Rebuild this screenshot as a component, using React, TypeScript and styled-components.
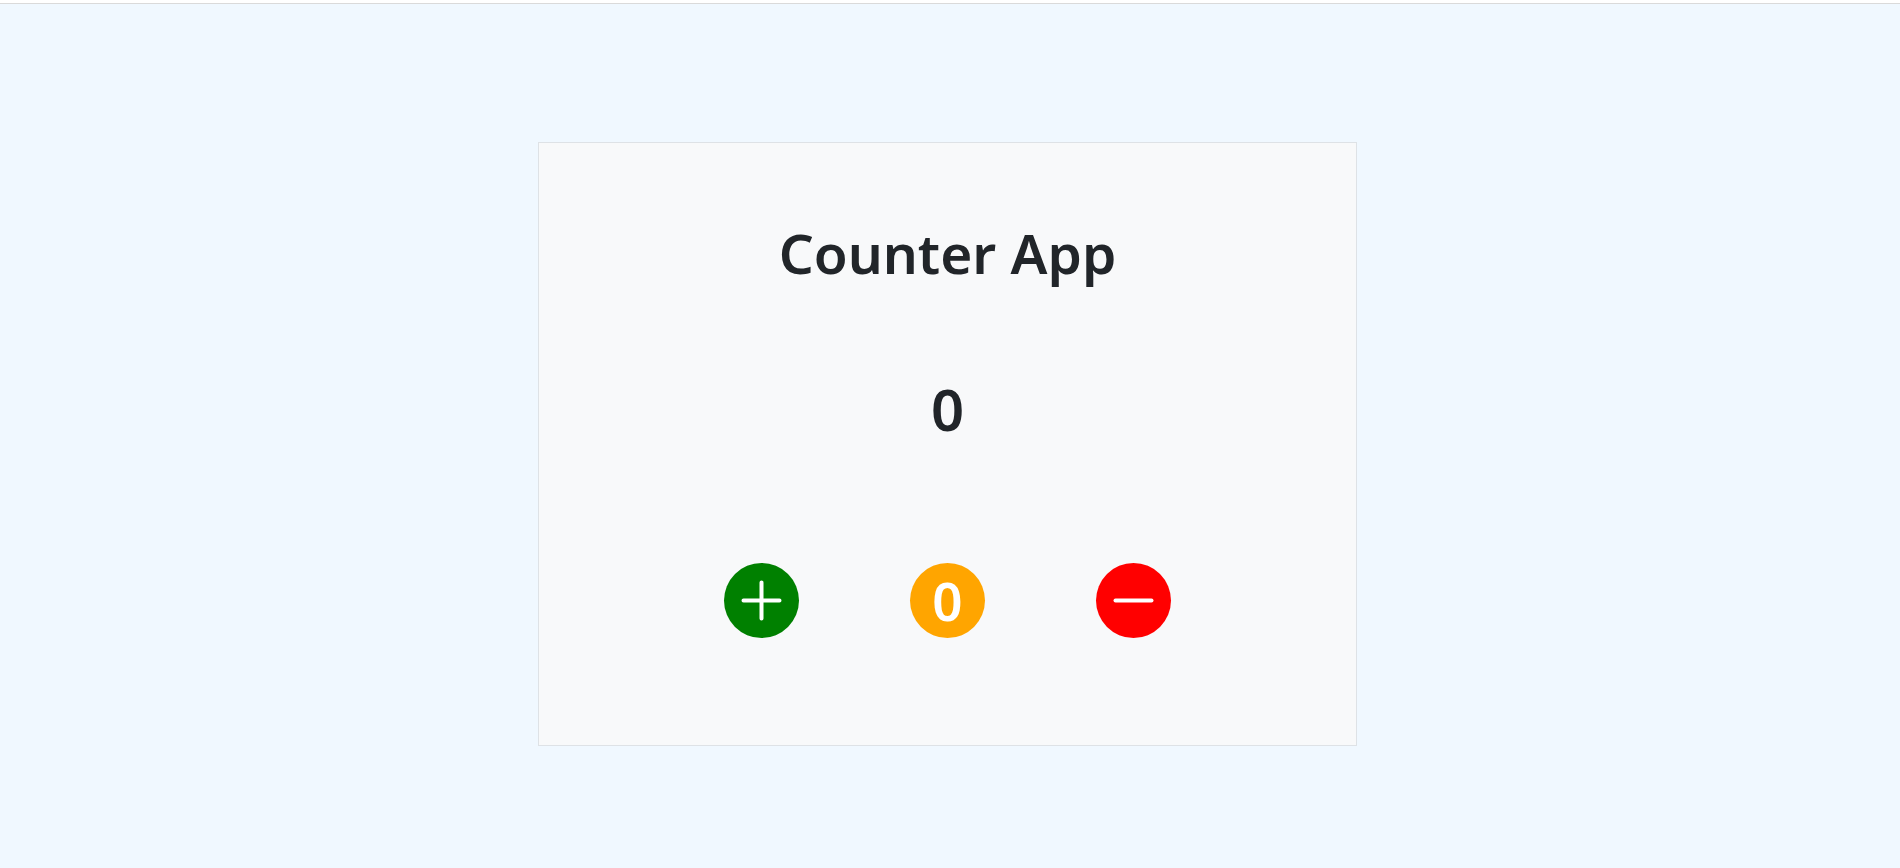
import React, { useState } from "react";
import styled, { createGlobalStyle } from "styled-components";

const Global = createGlobalStyle`
  html, body { margin: 0; padding: 0; background: #ffffff; }
  body { font-family: "Noto Sans", "Open Sans", sans-serif; color: #212529; }
`;

const TopStrip = styled.div`
  height: 3px;
  background: #ffffff;
  border-bottom: 1px solid #dadada;
`;

const Main = styled.main`
  min-height: 864px;
  background: #f0f8ff;
  display: flex;
  justify-content: center;
  align-items: flex-start;
  padding: 138px 5px 0 0;
  box-sizing: border-box;
`;

const Card = styled.section`
  width: 819px;
  box-sizing: border-box;
  background: #f8f9fa;
  border: 1px solid #dee2e6;
  display: flex;
  flex-direction: column;
  align-items: center;
  padding: 82px 0 107px;
`;

const Title = styled.h1`
  margin: 0;
  font-size: 55px;
  line-height: 56px;
  font-weight: 600;
  color: #212529;
`;

const Count = styled.div`
  margin-top: 98px;
  font-size: 58px;
  line-height: 60px;
  font-weight: 600;
  color: #212529;
`;

const ButtonRow = styled.div`
  margin-top: 124px;
  display: flex;
  gap: 111px;
`;

const RoundButton = styled.button<{ $bg: string }>`
  width: 75px;
  height: 75px;
  border-radius: 50%;
  border: none;
  padding: 0;
  background: ${(p) => p.$bg};
  color: #ffffff;
  display: flex;
  align-items: center;
  justify-content: center;
  cursor: pointer;
  font-family: "Noto Sans", "Open Sans", sans-serif;
  font-size: 53px;
  font-weight: 600;
  line-height: 1;
`;

const Plus = () => (
  <svg width="41" height="41" viewBox="0 0 41 41" fill="none">
    <path d="M20.5 2.5v36M2.5 20.5h36" stroke="#fff" strokeWidth="4" strokeLinecap="round" />
  </svg>
);

const Minus = () => (
  <svg width="41" height="41" viewBox="0 0 41 41" fill="none">
    <path d="M2.5 20.5h36" stroke="#fff" strokeWidth="4" strokeLinecap="round" />
  </svg>
);

export default function App() {
  const [count, setCount] = useState(0);
  return (
    <>
      <Global />
      <TopStrip />
      <Main>
        <Card>
          <Title>Counter App</Title>
          <Count>{count}</Count>
          <ButtonRow>
            <RoundButton $bg="#008000" onClick={() => setCount(count + 1)} aria-label="increment">
              <Plus />
            </RoundButton>
            <RoundButton $bg="#ffa500" onClick={() => setCount(0)} aria-label="reset">
              0
            </RoundButton>
            <RoundButton $bg="#ff0000" onClick={() => setCount(count - 1)} aria-label="decrement">
              <Minus />
            </RoundButton>
          </ButtonRow>
        </Card>
      </Main>
    </>
  );
}
